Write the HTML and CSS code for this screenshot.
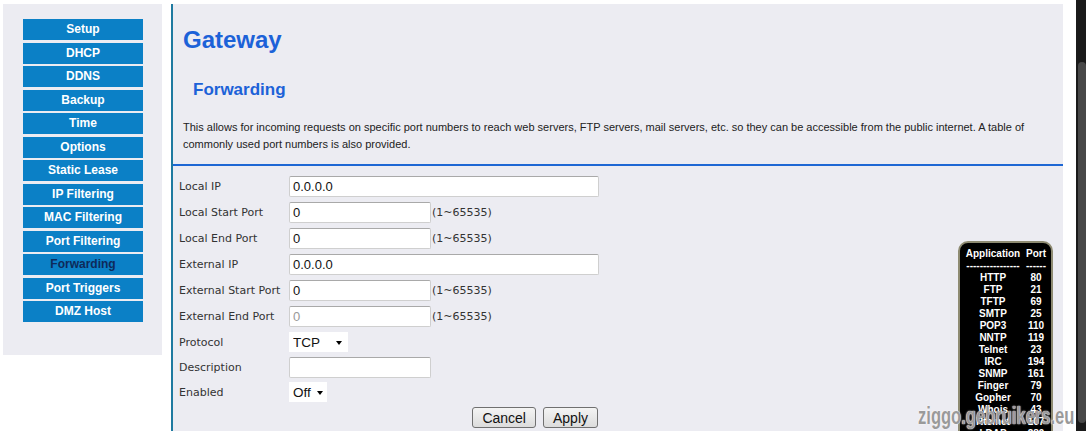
FILE: index.html
```html
<!DOCTYPE html>
<html>
<head>
  <meta charset="utf-8">
  <title>Gateway - Forwarding</title>
  <link rel="stylesheet" href="styles.css">
</head>
<body>
  <div class="page">
    <div class="sidebar">
      <a class="nav-btn">Setup</a>
      <a class="nav-btn">DHCP</a>
      <a class="nav-btn">DDNS</a>
      <a class="nav-btn">Backup</a>
      <a class="nav-btn">Time</a>
      <a class="nav-btn">Options</a>
      <a class="nav-btn">Static Lease</a>
      <a class="nav-btn">IP Filtering</a>
      <a class="nav-btn">MAC Filtering</a>
      <a class="nav-btn">Port Filtering</a>
      <a class="nav-btn active">Forwarding</a>
      <a class="nav-btn">Port Triggers</a>
      <a class="nav-btn">DMZ Host</a>
    </div>

    <div class="main">
      <div class="head">
        <h1>Gateway</h1>
        <h2>Forwarding</h2>
        <p class="intro">This allows for incoming requests on specific port numbers to reach web servers, FTP servers, mail servers, etc. so they can be accessible from the public internet. A table of commonly used port numbers is also provided.</p>
      </div>

      <form class="fwd-form">
        <div class="row">
          <label>Local IP</label>
          <input type="text" class="wide" value="0.0.0.0">
        </div>
        <div class="row">
          <label>Local Start Port</label>
          <input type="text" class="short" value="0">
          <span class="hint">(1~65535)</span>
        </div>
        <div class="row">
          <label>Local End Port</label>
          <input type="text" class="short" value="0">
          <span class="hint">(1~65535)</span>
        </div>
        <div class="row">
          <label>External IP</label>
          <input type="text" class="wide" value="0.0.0.0">
        </div>
        <div class="row">
          <label>External Start Port</label>
          <input type="text" class="short" value="0">
          <span class="hint">(1~65535)</span>
        </div>
        <div class="row">
          <label>External End Port</label>
          <input type="text" class="short" placeholder="0">
          <span class="hint">(1~65535)</span>
        </div>
        <div class="row small">
          <label>Protocol</label>
          <span class="select-wrap proto">
            <select>
              <option>TCP</option>
              <option>UDP</option>
              <option>Both</option>
            </select>
          </span>
        </div>
        <div class="row small">
          <label>Description</label>
          <input type="text" class="short">
        </div>
        <div class="row small">
          <label>Enabled</label>
          <span class="select-wrap onoff">
            <select>
              <option>Off</option>
              <option>On</option>
            </select>
          </span>
        </div>
        <div class="actions">
          <button type="button">Cancel</button>
          <button type="button">Apply</button>
        </div>
      </form>
    </div>
  </div>

  <div class="port-table">
    <table>
      <tr><td>Application</td><td>Port</td></tr>
      <tr><td>----------------</td><td>------</td></tr>
      <tr><td>HTTP</td><td>80</td></tr>
      <tr><td>FTP</td><td>21</td></tr>
      <tr><td>TFTP</td><td>69</td></tr>
      <tr><td>SMTP</td><td>25</td></tr>
      <tr><td>POP3</td><td>110</td></tr>
      <tr><td>NNTP</td><td>119</td></tr>
      <tr><td>Telnet</td><td>23</td></tr>
      <tr><td>IRC</td><td>194</td></tr>
      <tr><td>SNMP</td><td>161</td></tr>
      <tr><td>Finger</td><td>79</td></tr>
      <tr><td>Gopher</td><td>70</td></tr>
      <tr><td>Whois</td><td>43</td></tr>
      <tr><td>Rtelnet</td><td>107</td></tr>
      <tr><td>LDAP</td><td>389</td></tr>
    </table>
  </div>

  <div class="watermark">ziggo.gebruikers.eu</div>

  <div class="scrollbar"><div class="thumb"></div></div>
</body>
</html>
```

FILE: styles.css
```css
html, body{
  margin: 0;
  height: 100%;
  overflow: hidden;
  background: #fff;
  font-family: "Liberation Sans", Arial, sans-serif;
}

.page{
  display: flex;
  align-items: flex-start;
  padding: 4px 0 0 3px;
  height: 100%;
  box-sizing: border-box;
}

/* left menu */
.sidebar{
  width: 159px;
  height: 351px;
  box-sizing: border-box;
  padding: 15px 0 0 20px;
  background: #ececf2;
  display: flex;
  flex-direction: column;
  gap: 2.5px;
}
.nav-btn{
  display: block;
  width: 120px;
  height: 21px;
  line-height: 21px;
  background: #0b80c6;
  color: #fff;
  font-size: 12px;
  font-weight: bold;
  text-align: center;
  cursor: pointer;
}
.nav-btn.active{
  color: #0e2a5a;
}

/* content */
.main{
  margin-left: 9px;
  width: 892px;
  height: 100%;
  box-sizing: border-box;
  border-left: 2px solid #1f7aa0;
  background: #ececf2;
}
.head{
  padding: 0 0 11px 10px;
  border-bottom: 2px solid #1d67d4;
}
h1{
  margin: 22px 0 0;
  font-size: 24px;
  line-height: 28px;
  color: #1c62d8;
}
h2{
  margin: 26px 0 0 10px;
  font-size: 17px;
  line-height: 20px;
  color: #1c62d8;
}
.intro{
  margin: 19px 0 0;
  padding-right: 30px;
  font-size: 11px;
  line-height: 17px;
  color: #222;
}

.fwd-form{
  padding: 10px 0 0 6px;
  display: flex;
  flex-direction: column;
  gap: 5px;
}
.row{
  display: flex;
  align-items: center;
  height: 21px;
}
.row.small{
  height: 20px;
}
.row label{
  width: 110px;
  font-family: "DejaVu Sans", Verdana, sans-serif;
  font-size: 11px;
  color: #333;
}
.row input{
  height: 21px;
  box-sizing: border-box;
  margin: 0;
  padding: 0 3px;
  border: 1px solid #cfcfcf;
  border-top-color: #a9a9a9;
  border-radius: 2px;
  background: #fff;
  font-family: "Liberation Sans", Arial, sans-serif;
  font-size: 13px;
  color: #111;
}
.row input::placeholder{
  color: #999;
}
.wide{
  width: 310px;
}
.short{
  width: 142px;
}
.hint{
  margin-left: 1px;
  font-family: "DejaVu Sans", Verdana, sans-serif;
  font-size: 11px;
  color: #333;
}

.select-wrap{
  position: relative;
  display: inline-block;
  height: 20px;
  background: #fff;
}
.select-wrap select{
  -webkit-appearance: none;
  appearance: none;
  height: 20px;
  margin: 0;
  padding: 0 0 0 4px;
  border: none;
  background: transparent;
  font-family: "Liberation Sans", Arial, sans-serif;
  font-size: 13.5px;
  color: #111;
}
.proto select{
  width: 59px;
}
.onoff select{
  width: 38px;
}
.select-wrap::after{
  content: "";
  position: absolute;
  top: 9px;
  right: 4px;
  border-left: 3px solid transparent;
  border-right: 3px solid transparent;
  border-top: 4px solid #000;
  pointer-events: none;
}
.proto::after{
  right: 6px;
}

.actions{
  width: 419px;
  display: flex;
  justify-content: flex-end;
  gap: 7px;
}
.actions button{
  height: 21px;
  padding: 0 9px;
  border: 1px solid #707070;
  border-radius: 3px;
  background: linear-gradient(#f4f4f4, #dcdcdc);
  font-family: "Liberation Sans", Arial, sans-serif;
  font-size: 14px;
  color: #111;
}

/* port reference table */
.port-table{
  position: absolute;
  left: 958px;
  top: 241px;
  width: 95px;
  height: 230px;
  box-sizing: border-box;
  padding: 5px 2px;
  border: 2px solid #8e8b72;
  border-radius: 10px;
  background: #000;
}
.port-table table{
  border-collapse: collapse;
}
.port-table td{
  padding: 0;
  height: 12px;
  line-height: 12px;
  text-align: center;
  color: #fff;
  font-size: 10px;
  font-weight: bold;
  white-space: nowrap;
}
.port-table td:first-child{
  width: 62px;
}
.port-table td:last-child{
  width: 24px;
}

.watermark{
  position: absolute;
  left: 918px;
  top: 405px;
  font-size: 23px;
  line-height: 23px;
  font-weight: bold;
  color: #9a9a9a;
  text-shadow: 0 0 1px #fff, 0 0 2px #fff;
  transform: scaleX(0.72);
  transform-origin: left top;
  white-space: nowrap;
}

/* window scrollbar */
.scrollbar{
  position: fixed;
  top: 0;
  right: 0;
  width: 10px;
  height: 100%;
  background: #1a1a1a;
}
.scrollbar .thumb{
  position: absolute;
  top: 62px;
  bottom: 8px;
  left: 2px;
  right: 0;
  border-radius: 4px;
  background: #484848;
}
```
